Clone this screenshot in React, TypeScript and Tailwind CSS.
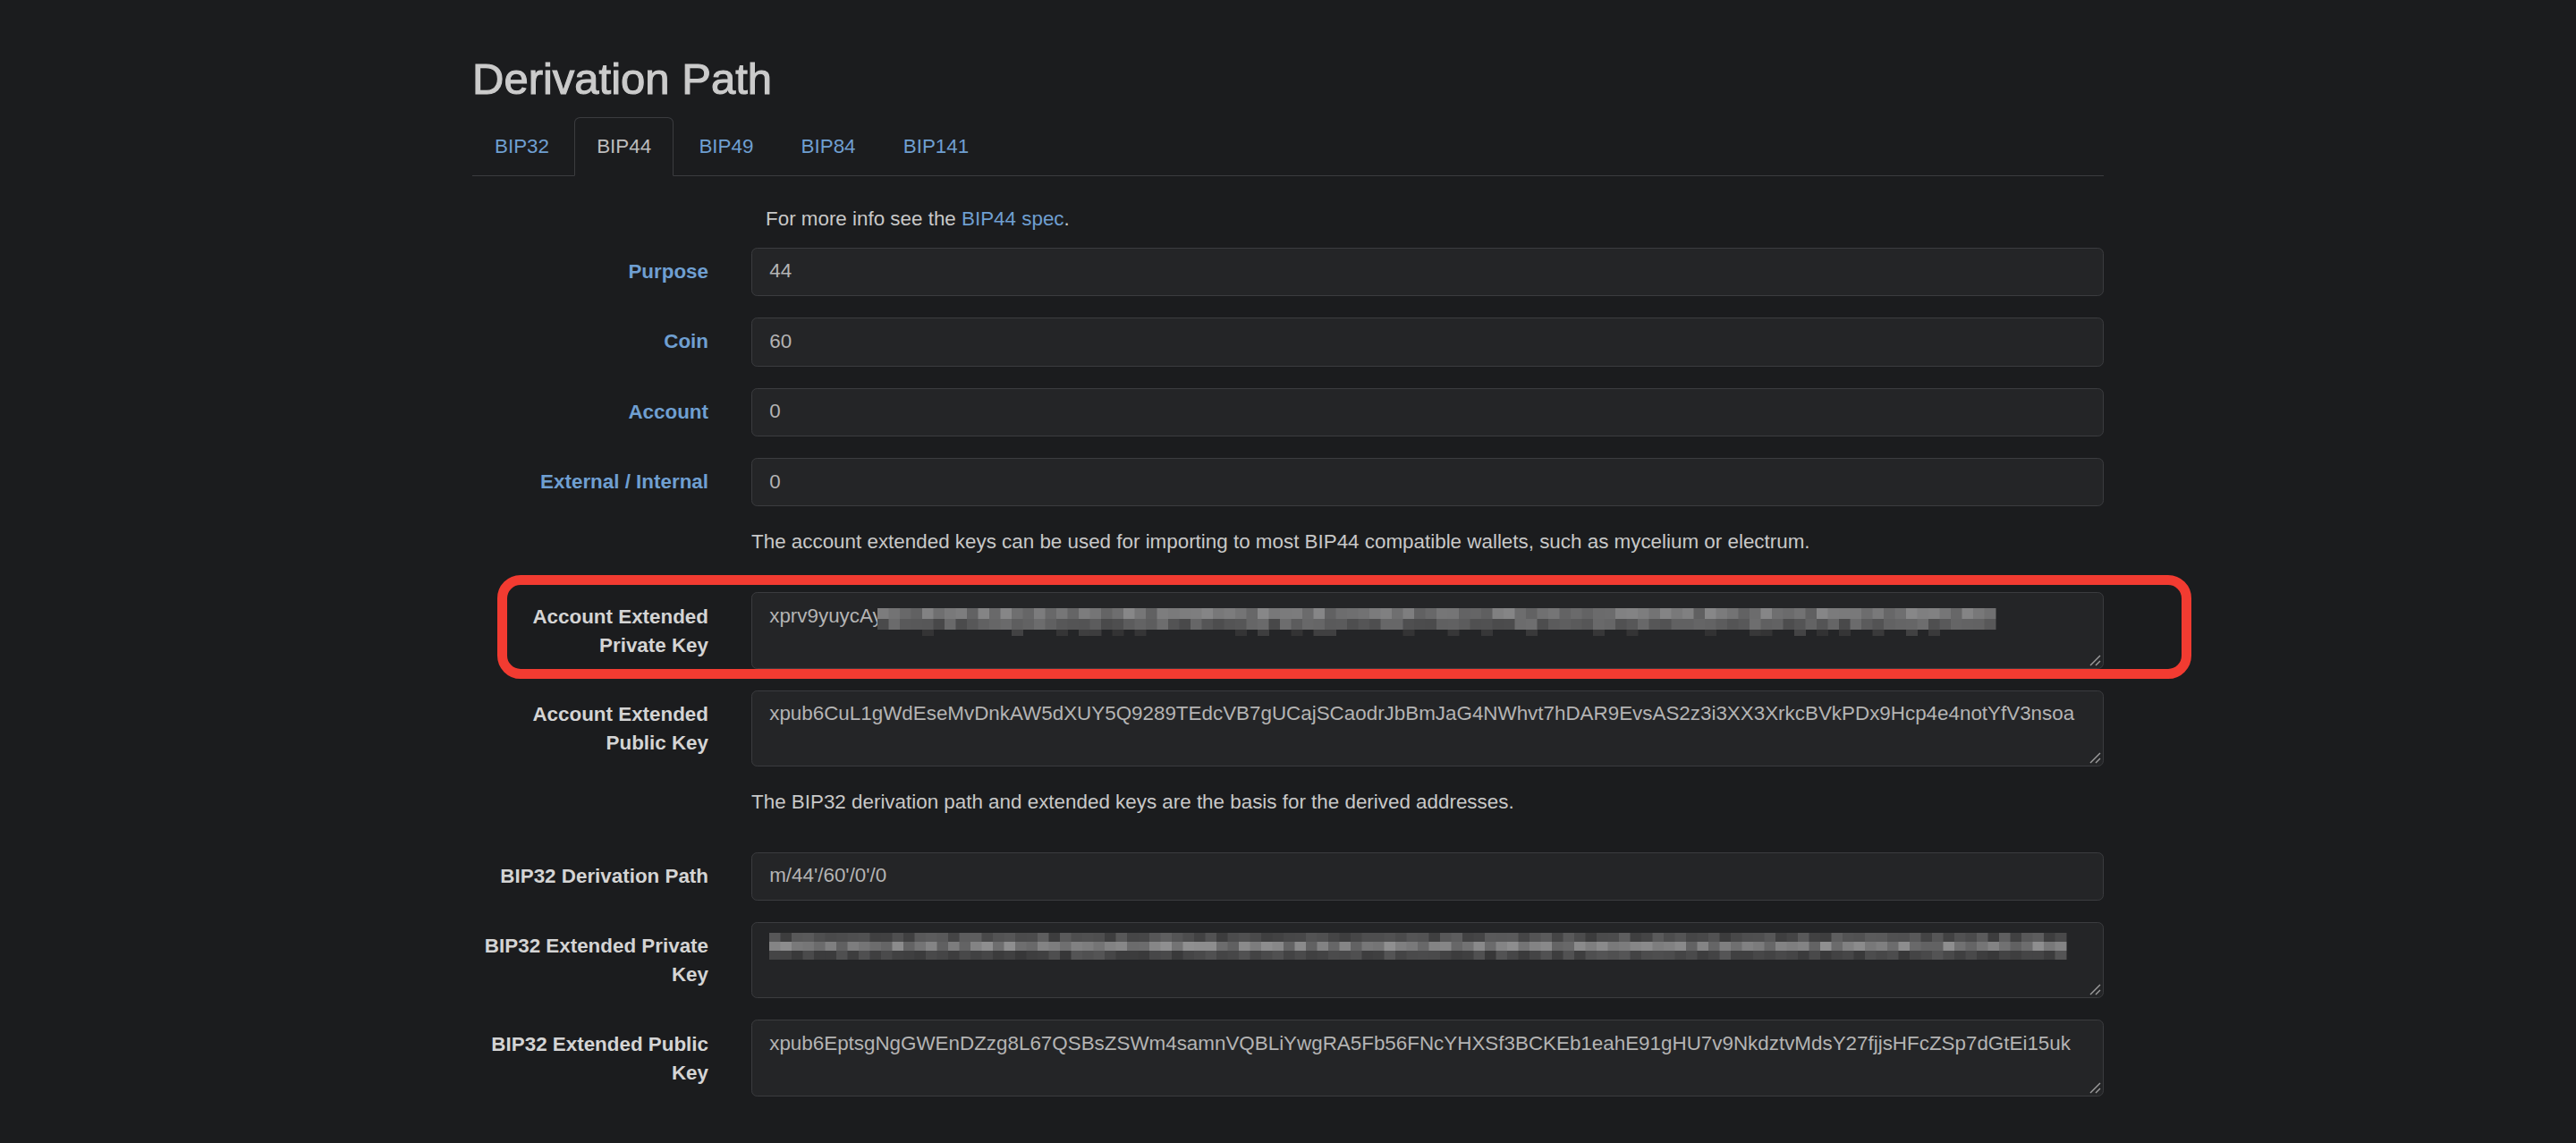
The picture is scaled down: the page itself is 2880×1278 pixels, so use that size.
import React from "react";

const BLUE = "text-[#6f9fd1]";

function makeRng(seed: number) {
  let s = seed;
  return () => {
    s = (s * 1103515245 + 12345) % 2147483648;
    return s / 2147483648;
  };
}

type Band = { y: number; h: number; lo: number; hi: number; fill?: number };

// pixelated "redacted" strip
function Mosaic({ width, bands, seed, cell = 12.5 }: { width: number; bands: Band[]; seed: number; cell?: number }) {
  const rnd = makeRng(seed);
  const cols = Math.floor(width / cell);
  const rects: React.ReactNode[] = [];
  bands.forEach((b, bi) => {
    for (let i = 0; i < cols; i++) {
      if (b.fill !== undefined && rnd() > b.fill) continue;
      const v = Math.round(b.lo + rnd() * (b.hi - b.lo));
      rects.push(
        <rect key={bi + "-" + i} x={i * cell} y={b.y} width={cell + 0.5} height={b.h} fill={`rgb(${v},${v},${v + 1})`} />
      );
    }
  });
  return (
    <svg width={width} height={32} className="inline-block align-top overflow-visible">
      {rects}
    </svg>
  );
}

function Grip() {
  return (
    <svg width="14" height="14" viewBox="0 0 14 14" className="absolute right-[2px] bottom-[2px]">
      <line x1="13" y1="2" x2="2" y2="13" stroke="#9c9c9c" strokeWidth="1.4" />
      <line x1="13" y1="8" x2="8" y2="13" stroke="#9c9c9c" strokeWidth="1.4" />
    </svg>
  );
}

function Row({ label, blue, children }: { label: string; blue?: boolean; children: React.ReactNode }) {
  return (
    <div className="flex pb-[24px]">
      <label className={`w-[264px] mr-[48px] shrink-0 pt-[11.2px] text-right font-bold ${blue ? BLUE : "text-[#d4d4d4]"}`}>
        {label}
      </label>
      <div className="flex-1">{children}</div>
    </div>
  );
}

function Input({ value }: { value: string }) {
  return (
    <div className="h-[54.4px] px-[19.2px] py-[9.6px] border border-[#3b3c3f] bg-[#242527] rounded-[6.4px] text-[#b4b4b4]">
      {value}
    </div>
  );
}

function Area({ children }: { children: React.ReactNode }) {
  return (
    <div className="relative h-[85.2px] px-[19.2px] py-[9.6px] border border-[#3b3c3f] bg-[#242527] rounded-[6.4px] text-[#b4b4b4] whitespace-nowrap overflow-hidden">
      {children}
      <Grip />
    </div>
  );
}

function Help({ children, indent }: { children: React.ReactNode; indent?: boolean }) {
  return <p className={`${indent ? "pl-[328px] pb-[16px]" : "pl-[312px] pb-[40px]"}`}>{children}</p>;
}

export default function App() {
  return (
    <div className="min-h-screen bg-[#1b1c1e] font-['Liberation_Sans',Arial,sans-serif] text-[22.4px] leading-[32px] text-[#c8c8c8]">
      <div className="mx-auto w-[1872px] px-[24px] pt-[62px] pb-[28px]">
        <h2 className="text-[49px] leading-[52.8px] mb-[16px] text-[#cbcbcb] [-webkit-text-stroke:1.1px_#cbcbcb]">
          Derivation Path
        </h2>

        <ul className="flex border-b border-[#3b3c3f]">
          {["BIP32", "BIP44", "BIP49", "BIP84", "BIP141"].map((t) => (
            <li key={t} className="-mb-px mr-[3.2px]">
              <a
                className={`block px-[24px] py-[16px] leading-[32px] border rounded-t-[6.4px] ${
                  t === "BIP44"
                    ? "border-[#3b3c3f] border-b-[#1b1c1e] bg-[#1b1c1e] text-[#bdbdbd]"
                    : "border-transparent " + BLUE
                }`}
              >
                {t}
              </a>
            </li>
          ))}
        </ul>

        <div className="pt-[32px]">
          <Help indent>
            For more info see the <a className={BLUE}>BIP44 spec</a>.
          </Help>

          <Row label="Purpose" blue>
            <Input value="44" />
          </Row>
          <Row label="Coin" blue>
            <Input value="60" />
          </Row>
          <Row label="Account" blue>
            <Input value="0" />
          </Row>
          <Row label="External / Internal" blue>
            <Input value="0" />
          </Row>

          <Help>
            The account extended keys can be used for importing to most BIP44 compatible wallets, such as mycelium or electrum.
          </Help>

          <div className="relative">
            <Row label="Account Extended Private Key">
              <Area>
                <span>xprv9yuycAy</span>
                <span className="inline-block ml-[-6px]">
                  <Mosaic
                    width={1262}
                    seed={17}
                    bands={[
                      { y: 7, h: 12, lo: 95, hi: 135 },
                      { y: 19, h: 12, lo: 72, hi: 110 },
                      { y: 31, h: 7, lo: 48, hi: 68, fill: 0.25 },
                    ]}
                  />
                </span>
              </Area>
            </Row>
            <div className="absolute left-[28px] right-[-98px] top-[-19.4px] bottom-[12.6px] border-[11px] border-[#f23b31] rounded-[26px] pointer-events-none" />
          </div>

          <Row label="Account Extended Public Key">
            <Area>
              xpub6CuL1gWdEseMvDnkAW5dXUY5Q9289TEdcVB7gUCajSCaodrJbBmJaG4NWhvt7hDAR9EvsAS2z3i3XX3XrkcBVkPDx9Hcp4e4notYfV3nsoa
            </Area>
          </Row>

          <Help>The BIP32 derivation path and extended keys are the basis for the derived addresses.</Help>

          <Row label="BIP32 Derivation Path">
            <Input value="m/44'/60'/0'/0" />
          </Row>
          <Row label="BIP32 Extended Private Key">
            <Area>
              <Mosaic
                width={1451}
                seed={91}
                bands={[
                  { y: 1, h: 10, lo: 60, hi: 95 },
                  { y: 11, h: 10, lo: 95, hi: 145 },
                  { y: 21, h: 10, lo: 55, hi: 85 },
                ]}
              />
            </Area>
          </Row>
          <Row label="BIP32 Extended Public Key">
            <Area>
              xpub6EptsgNgGWEnDZzg8L67QSBsZSWm4samnVQBLiYwgRA5Fb56FNcYHXSf3BCKEb1eahE91gHU7v9NkdztvMdsY27fjjsHFcZSp7dGtEi15uk
            </Area>
          </Row>
        </div>
      </div>
    </div>
  );
}
